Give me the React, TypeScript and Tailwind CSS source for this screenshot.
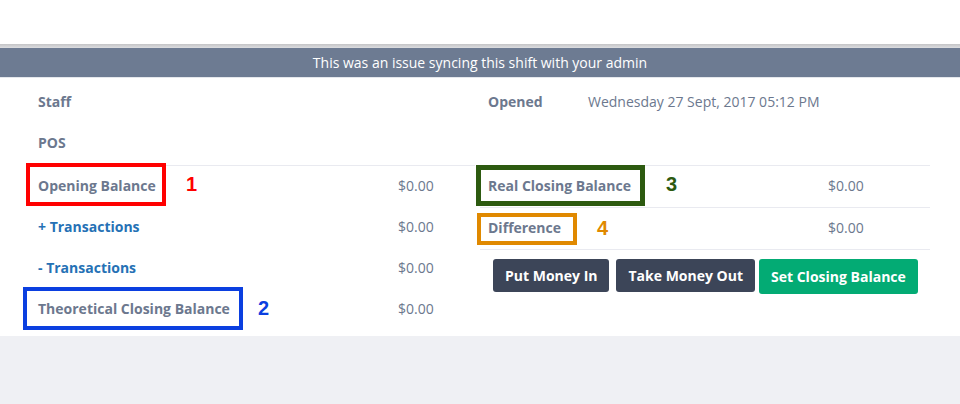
import React from "react";

const font = { fontFamily: '"Open Sans", "Liberation Sans", sans-serif' };
const numFont = { fontFamily: '"Liberation Sans", Arial, sans-serif' };

function Row({ label, value, labelClass = "text-[#6c788e] font-bold", cols = "grid-cols-[360px_1fr]", border = "h-[41px]" }: { label: string; value?: string; labelClass?: string; cols?: string; border?: string }) {
  return (
    <div className={`grid ${cols} pb-[2px] items-center text-[14px] ${border}`}>
      <div className={`px-2 ${labelClass}`}>{label}</div>
      <div className="px-2 text-[#6c788e]">{value}</div>
    </div>
  );
}

export default function App() {
  return (
    <div className="w-[960px] h-[404px] bg-[#eff0f4] relative overflow-hidden" style={font}>
      <div className="h-[44px] bg-white" />
      <div className="h-[4px] bg-gradient-to-b from-[#c4c4c6] to-[#dcdde0]" />
      <div className="h-[30px] bg-[#6d7b92] flex items-center justify-center text-white text-[14px] border-b border-[#e4e7ec]">
        This was an issue syncing this shift with your admin
      </div>
      <div className="bg-white px-[30px] pt-[4px] pb-[6px]">
        <div className="grid grid-cols-[445px_450px] gap-[5px]">
          <div>
            <Row label="Staff" />
            <Row label="POS" />
            <div className="mt-[1px] border-t border-[#e9eaf0]">
              <Row label="Opening Balance" value="$0.00" />
              <Row label="+ Transactions" value="$0.00" labelClass="text-[#2571b5] font-bold" />
              <Row label="- Transactions" value="$0.00" labelClass="text-[#2571b5] font-bold" />
              <Row label="Theoretical Closing Balance" value="$0.00" />
            </div>
          </div>
          <div>
            <Row label="Opened" value="Wednesday 27 Sept, 2017 05:12 PM" cols="grid-cols-[100px_1fr]" />
            <div className="h-[42px]" />
            <Row label="Real Closing Balance" value="$0.00" cols="grid-cols-[340px_1fr]" border="h-[42px] border-t border-[#e9eaf0]" />
            <Row label="Difference" value="$0.00" cols="grid-cols-[340px_1fr]" border="h-[42px] border-t border-[#e9eaf0]" />
            <div className="border-t border-[#e9eaf0] pt-[9px] pl-[13px] flex items-start">
              <button className="h-[33px] px-[12px] rounded-[3px] bg-[#3c4558] text-white text-[14px] font-bold">Put Money In</button>
              <button className="ml-[7px] h-[33px] px-[12px] rounded-[3px] bg-[#3c4558] text-white text-[14px] font-bold">Take Money Out</button>
              <button className="ml-[4px] h-[35px] px-[12px] rounded-[3px] bg-[#03ab74] text-white text-[14px] font-bold">Set Closing Balance</button>
            </div>
          </div>
        </div>
      </div>

      {/* annotation overlays */}
      <div className="absolute left-[26px] top-[163px] w-[140px] h-[43px] border-[4px] border-[#ff0000]" />
      <div className="absolute left-[23px] top-[287px] w-[220px] h-[43px] border-[4px] border-[#0b3fe0]" />
      <div className="absolute left-[476px] top-[165px] w-[169px] h-[41px] border-[5px] border-[#2d5a10]" />
      <div className="absolute left-[477px] top-[213px] w-[100px] h-[32px] border-[4px] border-[#e08900]" />
      <div className="absolute left-[186px] top-[174px] text-[20px] font-bold leading-none text-[#ff0000]" style={numFont}>1</div>
      <div className="absolute left-[258px] top-[298px] text-[20px] font-bold leading-none text-[#0b3fe0]" style={numFont}>2</div>
      <div className="absolute left-[666px] top-[174px] text-[20px] font-bold leading-none text-[#2d5a10]" style={numFont}>3</div>
      <div className="absolute left-[597px] top-[218px] text-[20px] font-bold leading-none text-[#e08900]" style={numFont}>4</div>
    </div>
  );
}
